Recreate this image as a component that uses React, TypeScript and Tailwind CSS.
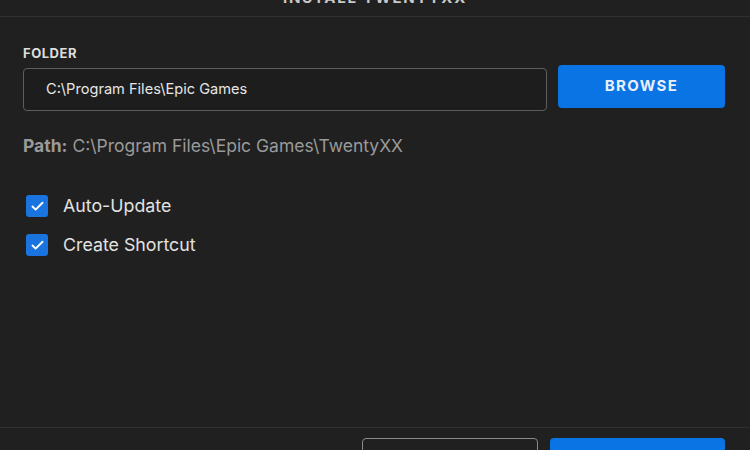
import { Check, X } from "lucide-react"

function CheckRow({ label }: { label: string }) {
  return (
    <label className="flex items-center h-6 pl-[3px] gap-[15px]">
      <span className="w-[22px] h-[22px] rounded-[3px] bg-[#1a74e0] flex items-center justify-center">
        <Check className="w-[15px] h-[15px] text-white" strokeWidth={3} />
      </span>
      <span className="text-[17.8px] text-[#e2e2e2]">{label}</span>
    </label>
  )
}

export default function App() {
  return (
    <div className="w-[750px] h-[450px] overflow-hidden bg-[#202020] font-['Inter',sans-serif]">
      <div className="-mt-[25px]">
        {/* Header */}
        <div className="relative h-[42px] flex items-center justify-center pt-[5px] border-b border-[#303030]">
          <h2 className="text-[15px] font-bold uppercase tracking-[0.12em] text-[#c8c8c8]">Install TwentyXX</h2>
          <button className="absolute right-[38px] top-[21px] -translate-y-1/2 text-[#aaaaaa]">
            <X className="w-[14px] h-[14px]" strokeWidth={2} />
          </button>
        </div>

        {/* Body */}
        <div className="h-[410px] px-[23px] pt-[28px]">
          <div className="text-[13px] leading-4 font-bold uppercase tracking-[0.04em] text-[#dddddd]">Folder</div>

          <div className="flex items-start gap-[11px] mt-[4px] pr-[2px]">
            <div className="mt-[3px] w-[524px] h-[43px] flex items-center px-[22px] rounded-[4px] border border-[#5e5e5e] bg-[#1d1d1d] text-[14.6px] text-[#e6e6e6]">
              C:\Program Files\Epic Games
            </div>
            <button className="w-[167px] h-[43px] rounded-[4px] bg-[#0a74e4] text-[15px] font-bold tracking-[0.09em] text-[#e8f1fb]">
              BROWSE
            </button>
          </div>

          <p className="mt-[23px] text-[17.5px] leading-6 text-[#9a9a9a]">
            <span className="font-bold">Path:</span> C:\Program Files\Epic Games\TwentyXX
          </p>

          <div className="mt-[36px] flex flex-col gap-[15px]">
            <CheckRow label="Auto-Update" />
            <CheckRow label="Create Shortcut" />
          </div>
        </div>

        {/* Footer */}
        <div className="border-t border-[#303030] px-[23px] pt-[10px] flex items-start">
          <div className="mt-[9px] text-[12px] font-bold uppercase tracking-[0.08em] text-[#9a9a9a]">
            Download Size: <span className="text-[#dddddd]">674.00MB</span>
          </div>
          <div className="ml-auto flex gap-[12px] pr-[2px]">
            <button className="w-[176px] h-[43px] rounded-[4px] border border-[#8a8a8a] text-[14px] font-bold tracking-[0.08em] text-[#e6e6e6]">
              CANCEL
            </button>
            <button className="w-[175px] h-[43px] rounded-[4px] bg-[#0a74e4] text-[14px] font-bold tracking-[0.08em] text-[#e8f1fb]">
              INSTALL
            </button>
          </div>
        </div>
      </div>
    </div>
  )
}
